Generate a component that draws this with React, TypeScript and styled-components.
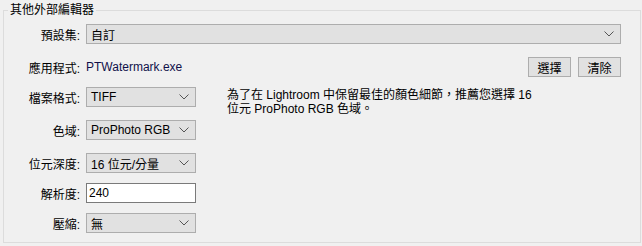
import React from 'react'
import styled, { createGlobalStyle } from 'styled-components'

const GlobalStyle = createGlobalStyle`
  html, body {
    margin: 0;
    padding: 0;
    background: #f0f0f0;
  }
  body {
    font-family: "Liberation Sans", "Noto Sans CJK TC", sans-serif;
    font-size: 12px;
    color: #000;
  }
`

const Group = styled.fieldset`
  margin: 2px 1px 0 3px;
  padding: 6px 19px 9px 0;
  border: 1px solid #dcdcdc;
  min-width: 0;
`

const Title = styled.legend`
  margin-left: 4px;
  padding: 0 2px;
  height: 16px;
  line-height: 16px;
  font-size: 12px;
`

const Row = styled.div<{ $gap?: number }>`
  display: flex;
  align-items: center;
  height: 20px;
  margin-top: ${({ $gap = 0 }) => $gap}px;
`

const Label = styled.div`
  width: 76px;
  margin-right: 6px;
  text-align: right;
  white-space: nowrap;
`

const Value = styled.div`
  flex: 1;
  color: #10104a;
`

const Combo = styled.div<{ $wide?: boolean }>`
  box-sizing: border-box;
  display: flex;
  align-items: center;
  justify-content: space-between;
  height: 20px;
  width: ${({ $wide }) => ($wide ? 'auto' : '110px')};
  flex: ${({ $wide }) => ($wide ? '1' : 'none')};
  padding: 0 6px 0 4px;
  background: #e1e1e1;
  border: 1px solid #adadad;
  white-space: nowrap;
`

const Field = styled.input`
  box-sizing: border-box;
  width: 110px;
  height: 20px;
  margin: 0;
  padding: 0 2px;
  background: #fff;
  border: 1px solid #7a7a7a;
  font: inherit;
  color: #000;
  outline: none;
`

const Button = styled.button`
  box-sizing: border-box;
  width: 43px;
  height: 20px;
  margin: 0 0 0 7px;
  padding: 0;
  background: #e1e1e1;
  border: 1px solid #adadad;
  font: inherit;
  color: #000;
`

const Middle = styled.div`
  display: flex;
  align-items: flex-start;
  margin-top: 10px;
`

const LeftCol = styled.div`
  display: flex;
  flex-direction: column;
`

const Note = styled.p`
  margin: 1px 0 0 31px;
  line-height: 14px;
  white-space: nowrap;
`

const Chevron = () => (
  <svg width="10" height="6" viewBox="0 0 10 6">
    <path d="M0.5 0.5 L5 5 L9.5 0.5" fill="none" stroke="#555" strokeWidth="1" />
  </svg>
)

const Select = ({ value, wide }: { value: string; wide?: boolean }) => (
  <Combo $wide={wide}>
    <span>{value}</span>
    <Chevron />
  </Combo>
)

export default function App() {
  return (
    <>
      <GlobalStyle />
      <Group>
        <Title>其他外部編輯器</Title>
        <Row>
          <Label>預設集:</Label>
          <Select value="自訂" wide />
        </Row>
        <Row $gap={13}>
          <Label>應用程式:</Label>
          <Value>PTWatermark.exe</Value>
          <Button>選擇</Button>
          <Button>清除</Button>
        </Row>
        <Middle>
          <LeftCol>
            <Row>
              <Label>檔案格式:</Label>
              <Select value="TIFF" />
            </Row>
            <Row $gap={13}>
              <Label>色域:</Label>
              <Select value="ProPhoto RGB" />
            </Row>
            <Row $gap={13}>
              <Label>位元深度:</Label>
              <Select value="16 位元/分量" />
            </Row>
          </LeftCol>
          <Note>
            為了在 Lightroom 中保留最佳的顏色細節，推薦您選擇 16
            <br />
            位元 ProPhoto RGB 色域。
          </Note>
        </Middle>
        <Row $gap={10}>
          <Label>解析度:</Label>
          <Field defaultValue="240" />
        </Row>
        <Row $gap={10}>
          <Label>壓縮:</Label>
          <Select value="無" />
        </Row>
      </Group>
    </>
  )
}
